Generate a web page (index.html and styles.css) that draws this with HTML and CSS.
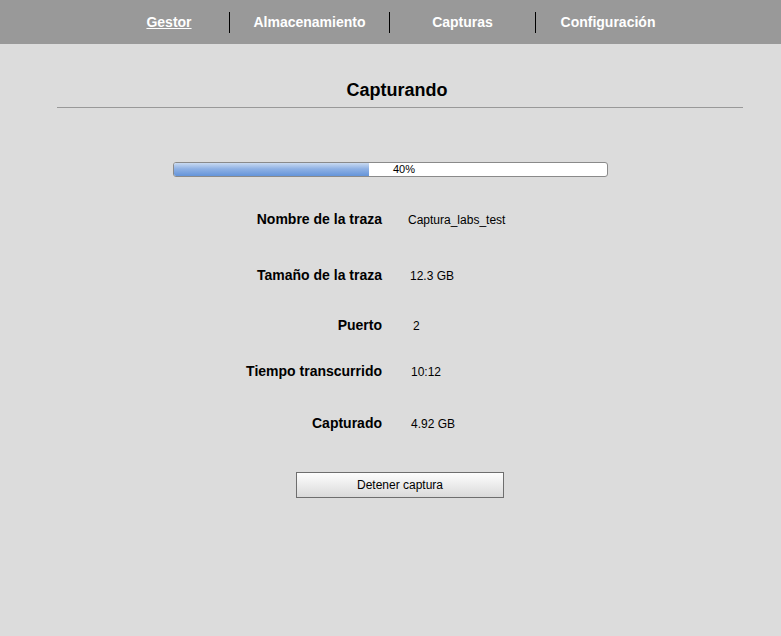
FILE: index.html
```html
<!DOCTYPE html>
<html lang="es">
<head>
<meta charset="utf-8">
<title>Capturando</title>
<link rel="stylesheet" href="styles.css">
</head>
<body>
<nav class="topnav">
  <a class="nav-item nav-gestor active" href="#">Gestor</a>
  <a class="nav-item nav-alm" href="#">Almacenamiento</a>
  <a class="nav-item nav-cap" href="#">Capturas</a>
  <a class="nav-item nav-conf" href="#">Configuración</a>
</nav>
<main class="content">
  <h1 class="title">Capturando</h1>
  <div class="progress">
    <div class="progress-fill" style="width:45%"></div>
    <span class="progress-label">40%</span>
  </div>
  <div class="info">
    <div class="row"><span class="label">Nombre de la traza</span><span class="value">Captura_labs_test</span></div>
    <div class="row"><span class="label">Tamaño de la traza</span><span class="value v2">12.3 GB</span></div>
    <div class="row"><span class="label">Puerto</span><span class="value v3">2</span></div>
    <div class="row"><span class="label">Tiempo transcurrido</span><span class="value v4">10:12</span></div>
    <div class="row"><span class="label">Capturado</span><span class="value v4">4.92 GB</span></div>
  </div>
  <div class="actions">
    <button class="btn" type="button">Detener captura</button>
  </div>
</main>
</body>
</html>
```
FILE: styles.css
```css
html, body {
  margin: 0;
  padding: 0;
}
body {
  background: #dcdcdc;
  font-family: "Liberation Sans", Arial, sans-serif;
  color: #000;
  min-height: 636px;
}
.topnav {
  display: flex;
  height: 44px;
  background: #999999;
  padding-left: 109px;
  align-items: center;
}
.nav-item {
  display: block;
  color: #fff;
  font-weight: bold;
  font-size: 14px;
  text-decoration: none;
  text-align: center;
  line-height: 21px;
  border-right: 1px solid #000;
}
.nav-gestor { width: 120px; }
.nav-alm { width: 159px; }
.nav-cap { width: 145px; }
.nav-conf { width: 144px; border-right: none; }
.nav-item.active { text-decoration: underline; }

.content {
  margin: 0 38px 0 57px;
}
.title {
  margin: 0;
  padding: 35px 6px 0 0;
  height: 28px;
  line-height: 22px;
  font-size: 18px;
  font-weight: bold;
  text-align: center;
  border-bottom: 1px solid #999;
}
.progress {
  position: relative;
  margin: 54px 0 0 116px;
  width: 433px;
  height: 13px;
  border: 1px solid #8a8a8a;
  border-radius: 3px;
  background: #fff;
  overflow: hidden;
}
.progress-fill {
  height: 100%;
  background: linear-gradient(to bottom, #c9daf1 0%, #8fb1e4 45%, #6494d9 100%);
}
.progress-label {
  position: absolute;
  top: 0;
  left: 219px;
  font-size: 11px;
  line-height: 13px;
}
.info {
  margin-top: 34px;
}
.row {
  display: grid;
  grid-template-columns: 325px 1fr;
  column-gap: 26px;
  align-items: center;
  height: 16px;
}
.row:nth-child(2) { margin-top: 40px; }
.row:nth-child(3) { margin-top: 34px; }
.row:nth-child(4) { margin-top: 30px; }
.row:nth-child(5) { margin-top: 36px; }
.label {
  text-align: right;
  font-weight: bold;
  font-size: 14px;
  line-height: 16px;
}
.value {
  font-size: 12px;
  line-height: 14px;
  padding-top: 2px;
}
.v2 { padding-left: 2px; }
.v3 { padding-left: 5px; }
.v4 { padding-left: 3px; }
.actions {
  display: flex;
  justify-content: center;
  margin-top: 41px;
}
.btn {
  width: 208px;
  height: 26px;
  border: 1px solid #6e6e6e;
  border-radius: 0;
  background: linear-gradient(to bottom, #fdfdfd 0%, #ececec 50%, #dadada 100%);
  font-family: "Liberation Sans", Arial, sans-serif;
  font-size: 12px;
  color: #000;
  padding: 0;
}
```
